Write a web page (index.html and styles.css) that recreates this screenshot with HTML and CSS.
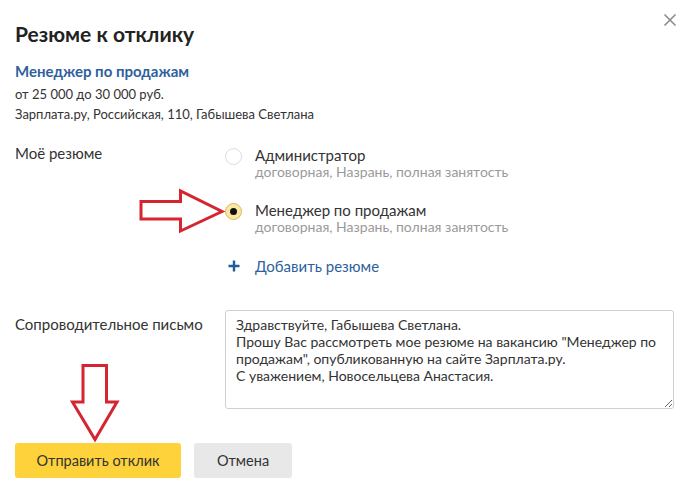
FILE: index.html
```html
<!DOCTYPE html>
<html lang="ru">
<head>
<meta charset="utf-8">
<title>Резюме к отклику</title>
<link rel="stylesheet" href="styles.css">
</head>
<body>
<div class="dialog">
  <button class="close" aria-label="Закрыть">
    <svg width="14" height="14" viewBox="0 0 14 14"><path d="M1.5 1.5 L12.5 12.5 M12.5 1.5 L1.5 12.5" stroke="#8c8c8c" stroke-width="1.6" fill="none"/></svg>
  </button>
  <h1 class="title">Резюме к отклику</h1>
  <div class="vacancy">
    <a class="vacancy-name" href="#">Менеджер по продажам</a>
    <div class="vacancy-line first">от 25 000 до 30 000 руб.</div>
    <div class="vacancy-line">Зарплата.ру, Российская, 110, Габышева Светлана</div>
  </div>

  <div class="form-row resumes-row">
    <div class="row-label">Моё резюме</div>
    <div class="options">
      <label class="option">
        <span class="radio"></span>
        <span class="option-text">
          <span class="option-title">Администратор</span>
          <span class="option-sub">договорная, Назрань, полная занятость</span>
        </span>
      </label>
      <label class="option">
        <span class="radio checked"></span>
        <span class="option-text">
          <span class="option-title">Менеджер по продажам</span>
          <span class="option-sub">договорная, Назрань, полная занятость</span>
        </span>
      </label>
      <a class="add-resume" href="#">
        <span class="plus"><svg width="12" height="12" viewBox="0 0 12 12"><path d="M6 0.5 V11.5 M0.5 6 H11.5" stroke="#1f5b9c" stroke-width="2.4" fill="none"/></svg></span>
        <span class="add-text">Добавить резюме</span>
      </a>
    </div>
  </div>

  <div class="form-row letter-row">
    <div class="row-label letter-label">Сопроводительное письмо</div>
    <textarea class="letter">Здравствуйте, Габышева Светлана.
Прошу Вас рассмотреть мое резюме на вакансию "Менеджер по продажам", опубликованную на сайте Зарплата.ру.
С уважением, Новосельцева Анастасия.</textarea>
  </div>

  <div class="actions">
    <button class="btn btn-primary">Отправить отклик</button>
    <button class="btn btn-secondary">Отмена</button>
  </div>

  <svg class="annotations" width="688" height="494" viewBox="0 0 688 494">
    <polygon points="141,201.5 180.5,201.5 180.5,191 222,211.5 180.5,231 180.5,219 141,219" fill="#fff" stroke="#d42530" stroke-width="3" stroke-linejoin="miter"/>
    <polygon points="83,365.5 106.5,365.5 106.5,402 117,402 95,439.5 72.5,402 83,402" fill="#fff" stroke="#d42530" stroke-width="3" stroke-linejoin="miter"/>
  </svg>
</div>
</body>
</html>
```

FILE: styles.css
```css
* { box-sizing: border-box; }
html, body { margin: 0; padding: 0; background: #fff; }
body {
  font-family: Lato, "Open Sans", "Liberation Sans", sans-serif;
  color: #333;
  width: 688px;
  height: 494px;
  overflow: hidden;
}
.dialog {
  position: relative;
  padding: 22px 15px 0 15px;
  height: 494px;
}
.close {
  position: absolute;
  top: 13px;
  right: 11px;
  width: 14px;
  height: 14px;
  padding: 0;
  border: 0;
  background: none;
  display: flex;
}
.title {
  margin: 0;
  font-size: 21px;
  line-height: 24px;
  font-weight: 700;
  color: #222;
}
.vacancy {
  margin-top: 15px;
  display: flex;
  flex-direction: column;
}
.vacancy-name {
  font-size: 15px;
  line-height: 20px;
  font-weight: 700;
  color: #2f5f9e;
  text-decoration: none;
}
.vacancy-line {
  font-size: 13px;
  line-height: 20px;
  color: #333;
}
.vacancy-line.first { margin-top: 3px; }
.form-row {
  display: grid;
  grid-template-columns: 210px 1fr;
}
.resumes-row { margin-top: 19px; }
.row-label {
  font-size: 15px;
  line-height: 20px;
  color: #333;
}
.options {
  padding-top: 4px;
  display: flex;
  flex-direction: column;
  gap: 22px;
}
.option {
  display: flex;
  gap: 13px;
  align-items: flex-start;
}
.radio {
  width: 17px;
  height: 17px;
  margin-top: 1px;
  border-radius: 50%;
  border: 1px solid #dcdcdc;
  background: #fff;
  flex: none;
  display: flex;
  align-items: center;
  justify-content: center;
}
.radio.checked {
  background: #fbe6a4;
  border-color: #d8b863;
}
.radio.checked::after {
  content: "";
  width: 7px;
  height: 7px;
  border-radius: 50%;
  background: #111;
}
.option-text {
  display: flex;
  flex-direction: column;
}
.option-title {
  font-size: 15px;
  line-height: 17px;
  color: #333;
}
.option-sub {
  font-size: 14px;
  line-height: 16px;
  color: #9a9a9a;
}
.add-resume {
  display: flex;
  gap: 13px;
  align-items: center;
  text-decoration: none;
  color: #2f5f9e;
  font-size: 15px;
  line-height: 18px;
}
.plus {
  width: 17px;
  display: flex;
  justify-content: center;
}
.letter-row { margin-top: 35px; }
.letter-label {
  padding-top: 6px;
  line-height: 17px;
}
.letter {
  width: 449px;
  height: 99px;
  border: 1px solid #cfcfcf;
  border-radius: 3px;
  padding: 5px 8px 5px 10px;
  font-family: Lato, "Open Sans", "Liberation Sans", sans-serif;
  font-size: 14px;
  line-height: 17px;
  color: #333;
  resize: both;
  overflow: hidden;
}
.actions {
  margin-top: 34px;
  display: flex;
  gap: 13px;
}
.btn {
  height: 35px;
  padding: 0;
  border: 0;
  border-radius: 3px;
  font-family: Lato, "Open Sans", "Liberation Sans", sans-serif;
  font-size: 14.5px;
  color: #333;
  white-space: nowrap;
  text-align: center;
}
.btn-primary { background: #fdd23a; width: 166px; }
.btn-secondary { background: #e8e8e8; width: 98px; }
.annotations {
  position: absolute;
  left: 0;
  top: 0;
  pointer-events: none;
}
```
